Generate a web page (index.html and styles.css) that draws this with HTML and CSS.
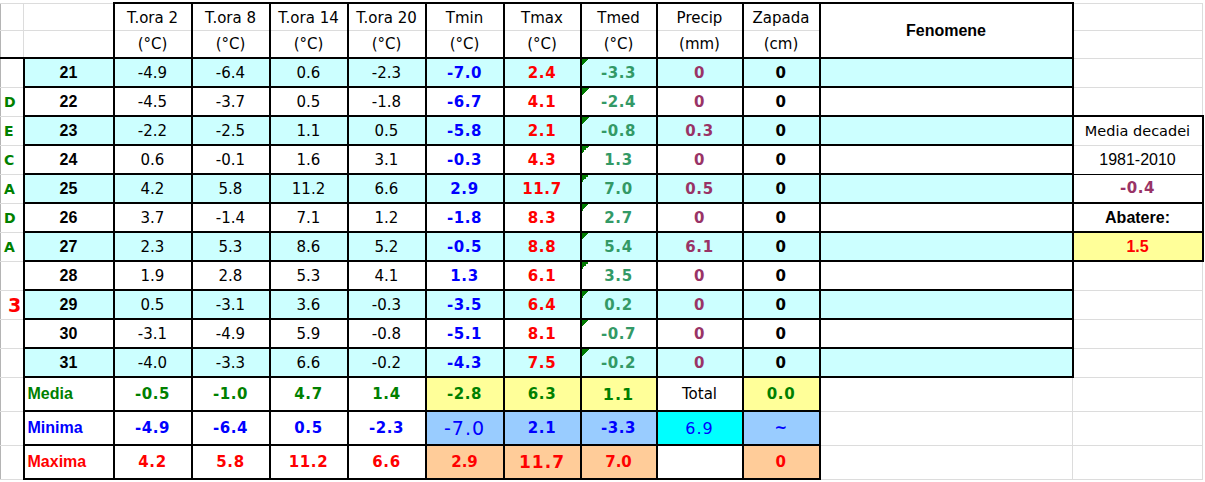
FILE: index.html
```html
<!DOCTYPE html>
<html lang="ro">
<head>
<meta charset="utf-8">
<title>Decada 3</title>
<link rel="stylesheet" href="styles.css">
</head>
<body>
<div class="sheet">
<table class="grid">
<colgroup>
<col class="w-a"><col class="w-b"><col class="w-c"><col class="w-c"><col class="w-c"><col class="w-c"><col class="w-c"><col class="w-h"><col class="w-i"><col class="w-j"><col class="w-k"><col class="w-l"><col class="w-m">
</colgroup>
<tbody>
<tr class="h1">
<td class="g a"></td><td class="g"></td>
<td class="hd top">T.ora 2</td><td class="hd top">T.ora 8</td><td class="hd top">T.ora 14</td><td class="hd top">T.ora 20</td>
<td class="hd top">Tmin</td><td class="hd top">Tmax</td><td class="hd top">Tmed</td><td class="hd top">Precip</td><td class="hd top">Zapada</td>
<td class="fen" rowspan="2">Fenomene</td><td class="g"></td>
</tr>
<tr class="h2">
<td class="g a hb"></td><td class="g hb"></td>
<td class="hd bot">(°C)</td><td class="hd bot">(°C)</td><td class="hd bot">(°C)</td><td class="hd bot">(°C)</td>
<td class="hd bot">(°C)</td><td class="hd bot">(°C)</td><td class="hd bot">(°C)</td><td class="hd bot">(mm)</td><td class="hd bot">(cm)</td>
<td class="g"></td>
</tr>
<tr class="r cy">
<td class="g a lt"></td><td class="day">21</td>
<td class="t">-4.9</td><td class="t">-6.4</td><td class="t">0.6</td><td class="t">-2.3</td>
<td class="m mn">-7.0</td><td class="m mx">2.4</td><td class="m md tri">-3.3</td><td class="m pr">0</td><td class="m zp">0</td>
<td></td><td class="g"></td>
</tr>
<tr class="r">
<td class="g a lt">D</td><td class="day">22</td>
<td class="t">-4.5</td><td class="t">-3.7</td><td class="t">0.5</td><td class="t">-1.8</td>
<td class="m mn">-6.7</td><td class="m mx">4.1</td><td class="m md tri">-2.4</td><td class="m pr">0</td><td class="m zp">0</td>
<td></td><td class="g"></td>
</tr>
<tr class="r cy">
<td class="g a lt">E</td><td class="day">23</td>
<td class="t">-2.2</td><td class="t">-2.5</td><td class="t">1.1</td><td class="t">0.5</td>
<td class="m mn">-5.8</td><td class="m mx">2.1</td><td class="m md tri">-0.8</td><td class="m pr">0.3</td><td class="m zp">0</td>
<td></td><td class="bx bx-1">Media decadei</td>
</tr>
<tr class="r">
<td class="g a lt">C</td><td class="day">24</td>
<td class="t">0.6</td><td class="t">-0.1</td><td class="t">1.6</td><td class="t">3.1</td>
<td class="m mn">-0.3</td><td class="m mx">4.3</td><td class="m md tri">1.3</td><td class="m pr">0</td><td class="m zp">0</td>
<td></td><td class="bx bx-2">1981-2010</td>
</tr>
<tr class="r cy">
<td class="g a lt">A</td><td class="day">25</td>
<td class="t">4.2</td><td class="t">5.8</td><td class="t">11.2</td><td class="t">6.6</td>
<td class="m mn">2.9</td><td class="m mx">11.7</td><td class="m md tri">7.0</td><td class="m pr">0.5</td><td class="m zp">0</td>
<td></td><td class="bx bx-3">-0.4</td>
</tr>
<tr class="r">
<td class="g a lt">D</td><td class="day">26</td>
<td class="t">3.7</td><td class="t">-1.4</td><td class="t">7.1</td><td class="t">1.2</td>
<td class="m mn">-1.8</td><td class="m mx">8.3</td><td class="m md tri">2.7</td><td class="m pr">0</td><td class="m zp">0</td>
<td></td><td class="bx bx-4">Abatere:</td>
</tr>
<tr class="r cy">
<td class="g a lt">A</td><td class="day">27</td>
<td class="t">2.3</td><td class="t">5.3</td><td class="t">8.6</td><td class="t">5.2</td>
<td class="m mn">-0.5</td><td class="m mx">8.8</td><td class="m md tri">5.4</td><td class="m pr">6.1</td><td class="m zp">0</td>
<td></td><td class="bx bx-5">1.5</td>
</tr>
<tr class="r">
<td class="g a lt"></td><td class="day">28</td>
<td class="t">1.9</td><td class="t">2.8</td><td class="t">5.3</td><td class="t">4.1</td>
<td class="m mn">1.3</td><td class="m mx">6.1</td><td class="m md tri">3.5</td><td class="m pr">0</td><td class="m zp">0</td>
<td></td><td class="g"></td>
</tr>
<tr class="r cy">
<td class="g a lt big">3</td><td class="day">29</td>
<td class="t">0.5</td><td class="t">-3.1</td><td class="t">3.6</td><td class="t">-0.3</td>
<td class="m mn">-3.5</td><td class="m mx">6.4</td><td class="m md tri">0.2</td><td class="m pr">0</td><td class="m zp">0</td>
<td></td><td class="g"></td>
</tr>
<tr class="r">
<td class="g a lt"></td><td class="day">30</td>
<td class="t">-3.1</td><td class="t">-4.9</td><td class="t">5.9</td><td class="t">-0.8</td>
<td class="m mn">-5.1</td><td class="m mx">8.1</td><td class="m md tri">-0.7</td><td class="m pr">0</td><td class="m zp">0</td>
<td></td><td class="g"></td>
</tr>
<tr class="r cy">
<td class="g a lt"></td><td class="day">31</td>
<td class="t">-4.0</td><td class="t">-3.3</td><td class="t">6.6</td><td class="t">-0.2</td>
<td class="m mn">-4.3</td><td class="m mx">7.5</td><td class="m md tri">-0.2</td><td class="m pr">0</td><td class="m zp">0</td>
<td></td><td class="g"></td>
</tr>
<tr class="s">
<td class="g a"></td><td class="lbl c-green">Media</td>
<td class="m c-green">-0.5</td><td class="m c-green">-1.0</td><td class="m c-green">4.7</td><td class="m c-green">1.4</td>
<td class="m c-green bg-y">-2.8</td><td class="m c-green bg-y">6.3</td><td class="m c-green bg-y m16">1.1</td><td class="hd">Total</td><td class="m c-green bg-y">0.0</td>
<td class="g"></td><td class="g"></td>
</tr>
<tr class="s">
<td class="g a"></td><td class="lbl c-blue">Minima</td>
<td class="m c-blue">-4.9</td><td class="m c-blue">-6.4</td><td class="m c-blue">0.5</td><td class="m c-blue">-2.3</td>
<td class="m c-blue bg-b m19 light">-7.0</td><td class="m c-blue bg-b">2.1</td><td class="m c-blue bg-b">-3.3</td><td class="m c-blue bg-c m16 light">6.9</td><td class="m c-blue bg-b">~</td>
<td class="g"></td><td class="g"></td>
</tr>
<tr class="s">
<td class="g a"></td><td class="lbl c-red">Maxima</td>
<td class="m c-red">4.2</td><td class="m c-red">5.8</td><td class="m c-red">11.2</td><td class="m c-red">6.6</td>
<td class="m c-red bg-o tight">2.9</td><td class="m c-red bg-o m17">11.7</td><td class="m c-red bg-o tight">7.0</td><td></td><td class="m c-red bg-o">0</td>
<td class="g"></td><td class="g"></td>
</tr>
</tbody>
</table>
</div>
</body>
</html>
```

FILE: styles.css
```css
html, body {
  margin: 0;
  padding: 0;
  background: #fff;
}
.sheet {
  padding-top: 2px;
  width: 1205px;
  height: 482px;
  overflow: hidden;
}
.grid {
  border-collapse: collapse;
  table-layout: fixed;
  width: 1203px;
  font-family: "DejaVu Sans", sans-serif;
  color: #000;
}
.w-a { width: 23px; }
.w-b { width: 90px; }
.w-c { width: 78px; }
.w-h { width: 77px; }
.w-i { width: 76px; }
.w-j { width: 86px; }
.w-k { width: 77px; }
.w-l { width: 253px; }
.w-m { width: 130px; }

td {
  border: 2px solid #000;
  padding: 0;
  text-align: center;
  vertical-align: middle;
  white-space: nowrap;
  overflow: hidden;
  background: #fff;
}
.h1 { height: 27px; }
.h2 { height: 28px; }
.r { height: 29px; }
.s { height: 34px; }

.g {
  border: 1px solid #dcdcdc;
  background: #fff;
}
.a { border-left-color: #b4b4b4; }
.hb { border-bottom: 2px solid #000; }

.hd {
  font-size: 15px;
  font-weight: normal;
}
.hd.top { border-bottom: 1px solid #dcdcdc; padding-top: 2px; }
.hd.bot { border-top: 1px solid #dcdcdc; }

.fen {
  font-family: "Liberation Sans", Arial, sans-serif;
  font-weight: bold;
  font-size: 16px;
}

.cy td:not(.g):not(.bx) { background-color: #ccffff; }

.lt {
  text-align: left;
  padding-left: 3px;
  font-family: "DejaVu Sans", sans-serif;
  font-weight: bold;
  font-size: 14px;
  color: #008000;
}
.lt.big {
  font-size: 19px;
  color: #ff0000;
  padding-left: 7px;
}

.day {
  font-family: "Liberation Sans", Arial, sans-serif;
  font-weight: bold;
  font-size: 16px;
}
.t { font-size: 15px; }

.m {
  font-family: "DejaVu Sans", sans-serif;
  font-weight: bold;
  font-size: 15px;
  letter-spacing: 0.6px;
}
.m16 { font-size: 16px; letter-spacing: 1px; }
.m17 { font-size: 17px; letter-spacing: 1px; }
.m19 { font-size: 19px; letter-spacing: 1px; }
.m.tight { letter-spacing: 0; font-size: 15px; }
.light { font-weight: normal; }

.mn { color: #0000ff; }
.mx { color: #ff0000; }
.md { color: #339966; }
.pr { color: #993366; }
.zp { color: #000; }

.tri {
  background-image: linear-gradient(to bottom right, #007a00 50%, transparent 50%);
  background-size: 7px 7px;
  background-repeat: no-repeat;
  background-position: 0 0;
}

.lbl {
  text-align: left;
  padding-left: 3px;
  font-family: "Liberation Sans", Arial, sans-serif;
  font-weight: bold;
  font-size: 16px;
}
.c-green { color: #008000; }
.c-blue { color: #0000ff; }
.c-red { color: #ff0000; }
.bg-y { background-color: #ffff99; }
.bg-b { background-color: #99ccff; }
.bg-o { background-color: #ffcc99; }
.bg-c { background-color: #00ffff; }

.bx {
  background: #fff;
  font-family: "Liberation Sans", Arial, sans-serif;
  font-size: 16px;
}
.bx-1 {
  font-family: "DejaVu Sans", sans-serif;
  font-size: 14.5px;
  border-bottom: 1px solid #dcdcdc;
}
.bx-2 {
  border-top: 1px solid #dcdcdc;
  border-bottom: 1px solid #000;
}
.bx-3 {
  border-top: 1px solid #000;
  font-family: "DejaVu Sans", sans-serif;
  font-weight: bold;
  font-size: 15px;
  letter-spacing: 0.6px;
  color: #993366;
}
.bx-4 { font-weight: bold; }
.bx-5 {
  font-weight: bold;
  color: #ff0000;
  background: #ffff99;
}
```
